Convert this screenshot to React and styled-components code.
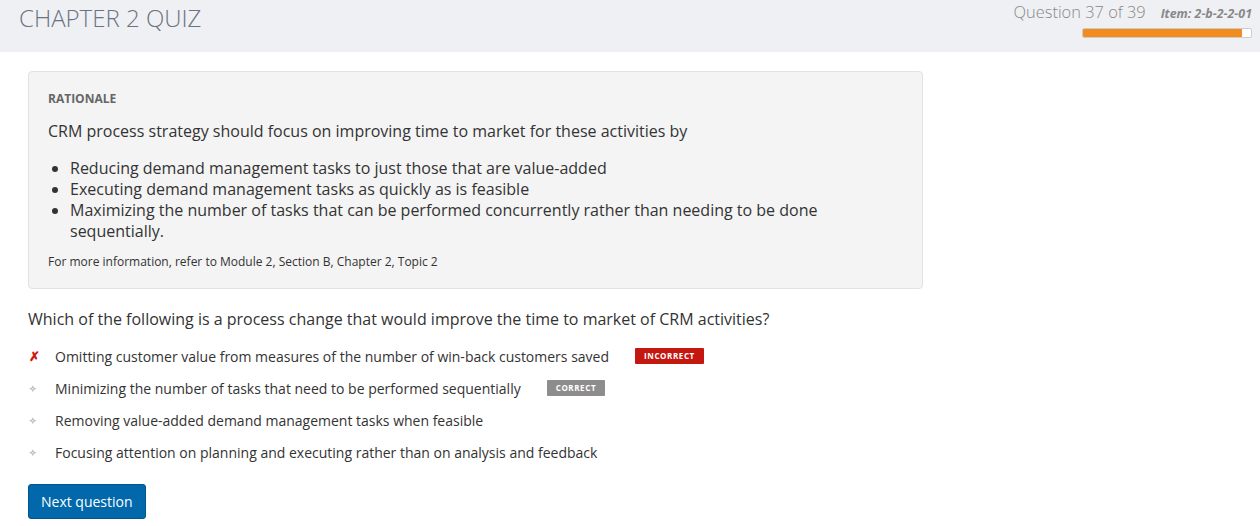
import React from "react";
import styled, { createGlobalStyle } from "styled-components";

const Global = createGlobalStyle`
  body {
    margin: 0;
    font-family: "Open Sans", "Noto Sans", sans-serif;
    background: #fff;
    color: #333;
  }
`;

const Header = styled.div`
  height: 52px;
  background: #eff0f4;
  display: flex;
  justify-content: space-between;
  align-items: flex-start;
  padding: 0 8px 0 19px;
`;
const Title = styled.h1`
  margin: 0;
  padding-top: 1px;
  font-size: 24px;
  font-weight: 300;
  color: #6b7382;
  letter-spacing: 0;
`;
const Progress = styled.div`
  display: flex;
  flex-direction: column;
  align-items: flex-end;
`;
const ProgressTop = styled.div`
  display: flex;
  align-items: baseline;
  gap: 15px;
`;
const QuestionCount = styled.span`
  font-size: 16.4px;
  font-weight: 300;
  color: #888;
`;
const ItemCode = styled.span`
  font-size: 12.4px;
  font-weight: 700;
  font-style: italic;
  color: #888;
`;
const Bar = styled.div`
  width: 168px;
  height: 8px;
  margin-top: 5px;
  border: 1px solid #ccc;
  border-radius: 2px;
  background: #fff;
  overflow: hidden;
`;
const Fill = styled.div`
  height: 100%;
  background: #f28c1e;
`;

const Main = styled.div`
  padding: 19px 28px 0;
`;
const Rationale = styled.div`
  width: 855px;
  background: #f4f4f4;
  border: 1px solid #e2e2e2;
  border-radius: 4px;
  padding: 18px 19px 18px;
`;
const Label = styled.div`
  font-size: 12px;
  font-weight: 700;
  color: #666;
  margin-bottom: 13px;
`;
const Lead = styled.p`
  margin: 0 0 16px;
  font-size: 16px;
  line-height: 22px;
`;
const Bullets = styled.ul`
  margin: 0 0 12px;
  padding-left: 22px;
  font-size: 16px;
  line-height: 21px;
  width: 760px;
`;
const Source = styled.div`
  font-size: 12px;
  line-height: 16px;
`;
const Question = styled.p`
  margin: 19px 0 10px;
  font-size: 16px;
  line-height: 22px;
`;
const Options = styled.div`
  display: flex;
  flex-direction: column;
`;
const Option = styled.div`
  display: flex;
  align-items: center;
  height: 32px;
  font-size: 14px;
  color: #333;
`;
const Mark = styled.span`
  width: 26px;
  display: inline-flex;
  justify-content: flex-start;
  padding-left: 1px;
  color: ${({ $wrong }) => ($wrong ? "#d0160d" : "#b5b5b5")};
  font-size: ${({ $wrong }) => ($wrong ? "13px" : "9px")};
  font-weight: 700;
`;
const Badge = styled.span`
  margin-left: 26px;
  background: ${({ $ok }) => ($ok ? "#8d8d8d" : "#c4170f")};
  color: #fff;
  font-size: 8px;
  font-weight: 700;
  letter-spacing: 0.6px;
  padding: 2px 9px;
  border-radius: 1px;
  line-height: 12px;
`;
const Button = styled.button`
  margin-top: 16px;
  background: #0068ab;
  color: #fff;
  border: 1px solid #00558c;
  border-radius: 3px;
  font-family: inherit;
  font-size: 14px;
  padding: 0 12px;
  height: 35px;
  cursor: pointer;
`;

const options = [
  { text: "Omitting customer value from measures of the number of win-back customers saved", wrong: true },
  { text: "Minimizing the number of tasks that need to be performed sequentially", ok: true },
  { text: "Removing value-added demand management tasks when feasible" },
  { text: "Focusing attention on planning and executing rather than on analysis and feedback" },
];

export default function App() {
  return (
    <>
      <Global />
      <Header>
        <Title>CHAPTER 2 QUIZ</Title>
        <Progress>
          <ProgressTop>
            <QuestionCount>Question 37 of 39</QuestionCount>
            <ItemCode>Item: 2-b-2-2-01</ItemCode>
          </ProgressTop>
          <Bar>
            <Fill style={{ width: `${(37 / 39) * 100}%` }} />
          </Bar>
        </Progress>
      </Header>
      <Main>
        <Rationale>
          <Label>RATIONALE</Label>
          <Lead>CRM process strategy should focus on improving time to market for these activities by</Lead>
          <Bullets>
            <li>Reducing demand management tasks to just those that are value-added</li>
            <li>Executing demand management tasks as quickly as is feasible</li>
            <li>Maximizing the number of tasks that can be performed concurrently rather than needing to be done sequentially.</li>
          </Bullets>
          <Source>For more information, refer to Module 2, Section B, Chapter 2, Topic 2</Source>
        </Rationale>
        <Question>Which of the following is a process change that would improve the time to market of CRM activities?</Question>
        <Options>
          {options.map((o) => (
            <Option key={o.text}>
              <Mark $wrong={o.wrong}>{o.wrong ? "✗" : "✧"}</Mark>
              {o.text}
              {o.wrong && <Badge>INCORRECT</Badge>}
              {o.ok && <Badge $ok>CORRECT</Badge>}
            </Option>
          ))}
        </Options>
        <Button>Next question</Button>
      </Main>
    </>
  );
}
